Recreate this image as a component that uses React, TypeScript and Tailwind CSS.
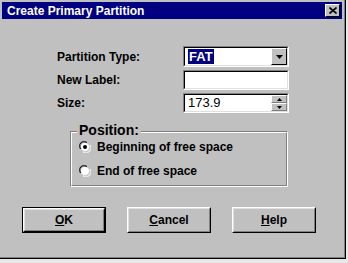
import React from 'react'

const font = { fontFamily: '"Liberation Sans", Arial, sans-serif' }

function Sunken({ children, className = '' }: { children?: React.ReactNode; className?: string }) {
  return (
    <div className={`border border-t-[#808080] border-l-[#808080] border-r-white border-b-white ${className}`}>
      <div className="h-full border border-t-black border-l-black border-r-[#dfdfdf] border-b-[#dfdfdf] bg-white flex items-center">
        {children}
      </div>
    </div>
  )
}

function Radio({ checked }: { checked?: boolean }) {
  return (
    <svg width="12" height="12" viewBox="0 0 12 12">
      <path d="M1 8 A5 5 0 0 1 8 1" stroke="#808080" fill="none" />
      <path d="M2 8 A4 4 0 0 1 8 2" stroke="#000" fill="none" />
      <circle cx="6" cy="6" r="4" fill="#fff" />
      <path d="M11 4 A5 5 0 0 1 4 11" stroke="#fff" fill="none" />
      <path d="M10 4 A4 4 0 0 1 4 10" stroke="#dfdfdf" fill="none" />
      {checked && <circle cx="6" cy="6" r="2" fill="#000" />}
    </svg>
  )
}

function Button({ label, u, isDefault }: { label: string; u: string; isDefault?: boolean }) {
  return (
    <div className={`w-[84px] h-[26px] ${isDefault ? 'border border-black' : ''}`}>
      <div className="h-full border border-t-white border-l-white border-r-black border-b-black">
        <div className="h-full border border-t-[#dfdfdf] border-l-[#dfdfdf] border-r-[#808080] border-b-[#808080] flex items-center justify-center text-[12px] font-bold text-black">
          <span className="underline">{u}</span>
          {label}
        </div>
      </div>
    </div>
  )
}

export default function App() {
  return (
    <div className="w-[348px] h-[263px] bg-[#e8e8e8] overflow-hidden" style={font}>
      <div className="w-[346px] h-[259px] bg-[#c0c0c0] border-r border-b border-black">
        <div className="h-full border-r border-b border-[#808080] pt-[2px] pl-[2px] pr-[2px]">
          {/* title bar */}
          <div className="h-[17px] bg-[#000080] flex items-center justify-between pl-[5px] pr-[2px]">
            <span className="text-white font-bold text-[12px] leading-none">Create Primary Partition</span>
            <div className="w-[15px] h-[13px] bg-[#c0c0c0] border border-t-white border-l-white border-r-black border-b-black flex items-center justify-center">
              <svg width="8" height="7" viewBox="0 0 8 7">
                <path d="M0.5 0.5 L7.5 6.5 M7.5 0.5 L0.5 6.5" stroke="#000" strokeWidth="1.6" />
              </svg>
            </div>
          </div>

          {/* fields */}
          <div className="mt-[27px] pl-[55px] flex flex-col gap-[3px] text-[12px] font-bold text-black">
            <div className="flex items-center">
              <span className="w-[126px]">Partition Type:</span>
              <Sunken className="w-[106px] h-[21px]">
                <div className="flex-1 pl-[3px]">
                  <span className="bg-[#000080] text-white px-[1px] font-bold text-[13px]">FAT</span>
                </div>
                <div className="w-[16px] h-full bg-[#c0c0c0] border border-t-white border-l-white border-r-black border-b-black flex items-center justify-center">
                  <svg width="7" height="4" viewBox="0 0 7 4">
                    <path d="M0 0 H7 L3.5 4 Z" fill="#000" />
                  </svg>
                </div>
              </Sunken>
            </div>
            <div className="flex items-center">
              <span className="w-[126px]">New Label:</span>
              <Sunken className="w-[106px] h-[20px]" />
            </div>
            <div className="flex items-center">
              <span className="w-[126px]">Size:</span>
              <Sunken className="w-[106px] h-[20px]">
                <span className="flex-1 pl-[3px] font-normal text-[13px]">173.9</span>
                <div className="w-[16px] h-full flex flex-col bg-[#c0c0c0]">
                  <div className="flex-1 border border-t-white border-l-white border-r-[#808080] border-b-[#808080] flex items-center justify-center">
                    <svg width="5" height="3" viewBox="0 0 5 3"><path d="M2.5 0 L5 3 H0 Z" fill="#000" /></svg>
                  </div>
                  <div className="flex-1 border border-t-white border-l-white border-r-[#808080] border-b-[#808080] flex items-center justify-center">
                    <svg width="5" height="3" viewBox="0 0 5 3"><path d="M0 0 H5 L2.5 3 Z" fill="#000" /></svg>
                  </div>
                </div>
              </Sunken>
            </div>
          </div>

          {/* group box */}
          <div className="mt-[9px] pt-[9px] ml-[68px] w-[218px] relative">
            <div className="h-[56px] border border-t-[#808080] border-l-[#808080] border-r-white border-b-white">
              <div className="h-full border border-t-white border-l-white border-r-[#808080] border-b-[#808080] pt-[6px] pl-[7px] flex flex-col gap-[8px] text-[12px] leading-[16px] font-bold text-black">
                <div className="flex items-center gap-[6px]">
                  <Radio checked />
                  <span>Beginning of free space</span>
                </div>
                <div className="flex items-center gap-[6px]">
                  <Radio />
                  <span>End of free space</span>
                </div>
              </div>
            </div>
            <span className="absolute left-[7px] top-[1px] bg-[#c0c0c0] px-[2px] text-[14px] font-bold leading-none text-black">
              Position:
            </span>
          </div>

          {/* buttons */}
          <div className="mt-[20px] ml-[20px] flex gap-[21px]">
            <Button u="O" label="K" isDefault />
            <Button u="C" label="ancel" />
            <Button u="H" label="elp" />
          </div>
        </div>
      </div>
    </div>
  )
}
